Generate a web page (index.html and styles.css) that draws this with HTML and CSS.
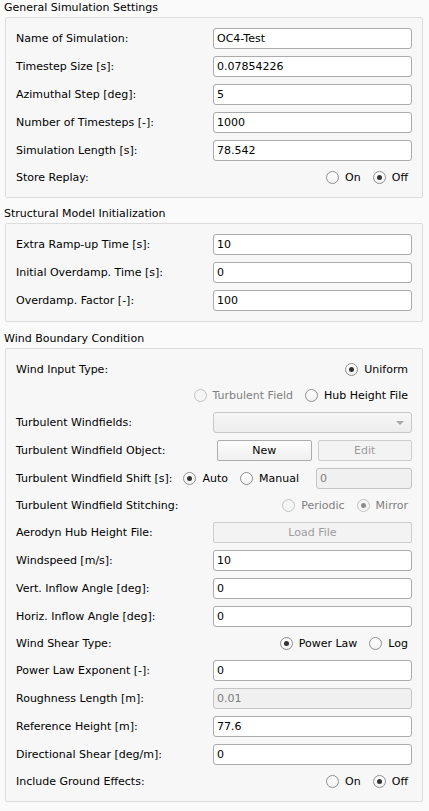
FILE: index.html
```html
<!DOCTYPE html>
<html>
<head>
<meta charset="utf-8">
<link rel="stylesheet" href="styles.css">
</head>
<body>
<section class="group">
  <div class="group-title">General Simulation Settings</div>
  <div class="box">
    <div class="row"><span class="lbl">Name of Simulation:</span><input class="edit" value="OC4-Test"></div>
    <div class="row"><span class="lbl">Timestep Size [s]:</span><input class="edit" value="0.07854226"></div>
    <div class="row"><span class="lbl">Azimuthal Step [deg]:</span><input class="edit" value="5"></div>
    <div class="row"><span class="lbl">Number of Timesteps [-]:</span><input class="edit" value="1000"></div>
    <div class="row"><span class="lbl">Simulation Length [s]:</span><input class="edit" value="78.542"></div>
    <div class="row short"><span class="lbl">Store Replay:</span>
      <div class="radios">
        <span class="radio"><span class="circle"></span>On</span>
        <span class="radio on"><span class="circle"></span>Off</span>
      </div>
    </div>
  </div>
</section>

<section class="group">
  <div class="group-title">Structural Model Initialization</div>
  <div class="box">
    <div class="row"><span class="lbl">Extra Ramp-up Time [s]:</span><input class="edit" value="10"></div>
    <div class="row"><span class="lbl">Initial Overdamp. Time [s]:</span><input class="edit" value="0"></div>
    <div class="row"><span class="lbl">Overdamp. Factor [-]:</span><input class="edit" value="100"></div>
  </div>
</section>

<section class="group group-wind">
  <div class="group-title">Wind Boundary Condition</div>
  <div class="box box-wind">
    <div class="row short"><span class="lbl">Wind Input Type:</span>
      <div class="radios"><span class="radio on"><span class="circle"></span>Uniform</span></div>
    </div>
    <div class="row short full">
      <div class="radios">
        <span class="radio disabled"><span class="circle"></span>Turbulent Field</span>
        <span class="radio"><span class="circle"></span>Hub Height File</span>
      </div>
    </div>
    <div class="row"><span class="lbl">Turbulent Windfields:</span>
      <div class="combo"><span class="arrow"></span></div>
    </div>
    <div class="row"><span class="lbl">Turbulent Windfield Object:</span>
      <div class="btn-pair"><button class="btn">New</button><button class="btn" disabled>Edit</button></div>
    </div>
    <div class="row-flex"><span class="lbl">Turbulent Windfield Shift [s]:</span>
      <div class="shift">
        <span class="radio on"><span class="circle"></span>Auto</span>
        <span class="radio"><span class="circle"></span>Manual</span>
        <input class="edit edit-small" value="0" disabled>
      </div>
    </div>
    <div class="row short"><span class="lbl">Turbulent Windfield Stitching:</span>
      <div class="radios">
        <span class="radio disabled"><span class="circle"></span>Periodic</span>
        <span class="radio disabled on"><span class="circle"></span>Mirror</span>
      </div>
    </div>
    <div class="row"><span class="lbl">Aerodyn Hub Height File:</span><button class="btn" disabled>Load File</button></div>
    <div class="row"><span class="lbl">Windspeed [m/s]:</span><input class="edit" value="10"></div>
    <div class="row"><span class="lbl">Vert. Inflow Angle [deg]:</span><input class="edit" value="0"></div>
    <div class="row"><span class="lbl">Horiz. Inflow Angle [deg]:</span><input class="edit" value="0"></div>
    <div class="row short"><span class="lbl">Wind Shear Type:</span>
      <div class="radios">
        <span class="radio on"><span class="circle"></span>Power Law</span>
        <span class="radio"><span class="circle"></span>Log</span>
      </div>
    </div>
    <div class="row"><span class="lbl">Power Law Exponent [-]:</span><input class="edit" value="0"></div>
    <div class="row"><span class="lbl">Roughness Length [m]:</span><input class="edit" value="0.01" disabled></div>
    <div class="row"><span class="lbl">Reference Height [m]:</span><input class="edit" value="77.6"></div>
    <div class="row"><span class="lbl">Directional Shear [deg/m]:</span><input class="edit" value="0"></div>
    <div class="row short"><span class="lbl">Include Ground Effects:</span>
      <div class="radios">
        <span class="radio"><span class="circle"></span>On</span>
        <span class="radio on"><span class="circle"></span>Off</span>
      </div>
    </div>
  </div>
</section>
</body>
</html>
```
FILE: styles.css
```css
html, body {
  margin: 0;
  padding: 0;
  background: #fafafa;
}
body {
  font-family: "DejaVu Sans", sans-serif;
  font-size: 11px;
  color: #000;
  height: 811px;
  overflow: hidden;
}
.group + .group {
  margin-top: 8px;
}
.group-wind {
  margin-top: 9px !important;
}
.group-title {
  height: 17px;
  line-height: 15px;
  padding-left: 4px;
}
.box {
  margin: 0 6px 0 5px;
  border: 1px solid #dcdcdc;
  border-radius: 2px;
  background: #f7f7f7;
  padding: 10px;
  display: flex;
  flex-direction: column;
  gap: 7px;
}
.box-wind {
  padding-top: 11px;
}
.row {
  display: grid;
  grid-template-columns: 197px 1fr;
  align-items: center;
  height: 21px;
}
.row.short {
  height: 19px;
}
.row.full {
  grid-template-columns: 1fr;
}
.row-flex {
  display: flex;
  align-items: center;
  justify-content: space-between;
  height: 21px;
}
.lbl {
  white-space: nowrap;
}
.edit {
  box-sizing: border-box;
  width: 100%;
  height: 21px;
  margin: 0;
  padding: 0 3px;
  font-family: "DejaVu Sans", sans-serif;
  font-size: 11px;
  color: #000;
  background: #fff;
  border: 1px solid #ababab;
  border-radius: 3px;
  outline: none;
}
.edit:disabled {
  background: #f0f0f0;
  color: #7c7c7c;
  border-color: #c4c4c4;
}
.edit-small {
  width: 96px;
  margin-left: 5px;
}
.radios {
  display: flex;
  justify-content: flex-end;
  align-items: center;
  gap: 12px;
  padding-right: 4px;
}
.radio {
  display: flex;
  align-items: center;
  gap: 6px;
  white-space: nowrap;
}
.circle {
  box-sizing: border-box;
  width: 13px;
  height: 13px;
  border-radius: 50%;
  border: 1px solid #8e8e8e;
  background: linear-gradient(#ffffff, #f1f1f1);
  display: flex;
  align-items: center;
  justify-content: center;
}
.radio.on .circle::after {
  content: "";
  width: 5px;
  height: 5px;
  border-radius: 50%;
  background: #333;
}
.radio.disabled {
  color: #7f7f7f;
}
.radio.disabled .circle {
  border-color: #c2c2c2;
  background: #f5f5f5;
}
.radio.disabled.on .circle::after {
  background: #8c8c8c;
}
.shift {
  display: flex;
  align-items: center;
  gap: 12px;
}
.combo {
  box-sizing: border-box;
  height: 21px;
  border: 1px solid #c8c8c8;
  border-radius: 3px;
  background: linear-gradient(#f6f6f6, #ededed);
  display: flex;
  align-items: center;
  justify-content: flex-end;
  padding-right: 7px;
}
.arrow {
  width: 0;
  height: 0;
  border-left: 4px solid transparent;
  border-right: 4px solid transparent;
  border-top: 4px solid #a8a8a8;
}
.btn-pair {
  display: flex;
  gap: 6px;
  padding-left: 4px;
}
.btn {
  box-sizing: border-box;
  flex: 1;
  width: 100%;
  height: 21px;
  margin: 0;
  padding: 0;
  font-family: "DejaVu Sans", sans-serif;
  font-size: 11px;
  color: #000;
  border: 1px solid #adadad;
  border-radius: 2px;
  background: linear-gradient(#fdfdfd, #efefef);
}
.btn:disabled {
  color: #9c9c9c;
  border-color: #cdcdcd;
  background: #f3f3f3;
}
```
